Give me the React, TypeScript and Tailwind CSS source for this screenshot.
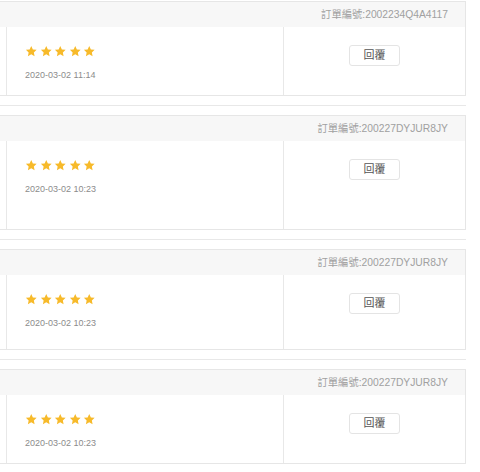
import React from 'react';

type Review = {
  orderNo: string;
  time: string;
  bodyHeight: string;
  top: string;
};

const reviews: Review[] = [
  { orderNo: '2002234Q4A4117', time: '2020-03-02 11:14', bodyHeight: 'h-[68px]', top: 'mt-px' },
  { orderNo: '200227DYJUR8JY', time: '2020-03-02 10:23', bodyHeight: 'h-[88px]', top: '' },
  { orderNo: '200227DYJUR8JY', time: '2020-03-02 10:23', bodyHeight: 'h-[74px]', top: '' },
  { orderNo: '200227DYJUR8JY', time: '2020-03-02 10:23', bodyHeight: 'h-[68px]', top: '' },
];

// 星形アイコン
const Star: React.FC = () => (
  <svg viewBox="0 0 24 24" className="h-[12.5px] w-[12.5px]" fill="#f7ba2a">
    <path d="M12 1.8l3.1 6.6 7.2.9-5.3 5 1.4 7.1L12 17.9l-6.4 3.5 1.4-7.1-5.3-5 7.2-.9z" />
  </svg>
);

const ReviewCard: React.FC<{ review: Review }> = ({ review }) => (
  <div className={`w-[466px] border border-l-0 border-[#e6e6e6] bg-white ${review.top}`}>
    {/* ヘッダー */}
    <div className="flex h-[25px] items-center justify-end bg-[#f7f7f7] pr-[17px] text-[10.3px] text-[#a0a0a0]">
      訂單編號:{review.orderNo}
    </div>
    {/* 本体 */}
    <div className={`flex ${review.bodyHeight}`}>
      <div className="w-[7px] shrink-0 border-r border-[#e8e8e8]" />
      <div className="w-[277px] shrink-0 border-r border-[#e8e8e8] pl-[18px] pt-[18px]">
        <div className="flex gap-[2px]">
          {[0, 1, 2, 3, 4].map(i => (
            <Star key={i} />
          ))}
        </div>
        <div className="mt-[11px] text-[9px] leading-[12px] text-[#8c8c8c]">{review.time}</div>
      </div>
      <div className="flex flex-1 justify-center pt-[18px]">
        <button className="h-[21px] w-[51px] rounded-[3px] border border-[#e4e4e4] bg-white text-[11px] text-[#555]">
          回覆
        </button>
      </div>
    </div>
  </div>
);

export default function App() {
  return (
    <div
      className="h-[472px] w-[480px] overflow-hidden bg-white"
      style={{ fontFamily: '"Liberation Sans", "Noto Sans CJK TC", sans-serif' }}
    >
      {reviews.map((r, i) => (
        <React.Fragment key={i}>
          {i > 0 && <div className="my-[9px] h-px w-[466px] bg-[#e8e8e8]" />}
          <ReviewCard review={r} />
        </React.Fragment>
      ))}
    </div>
  );
}
